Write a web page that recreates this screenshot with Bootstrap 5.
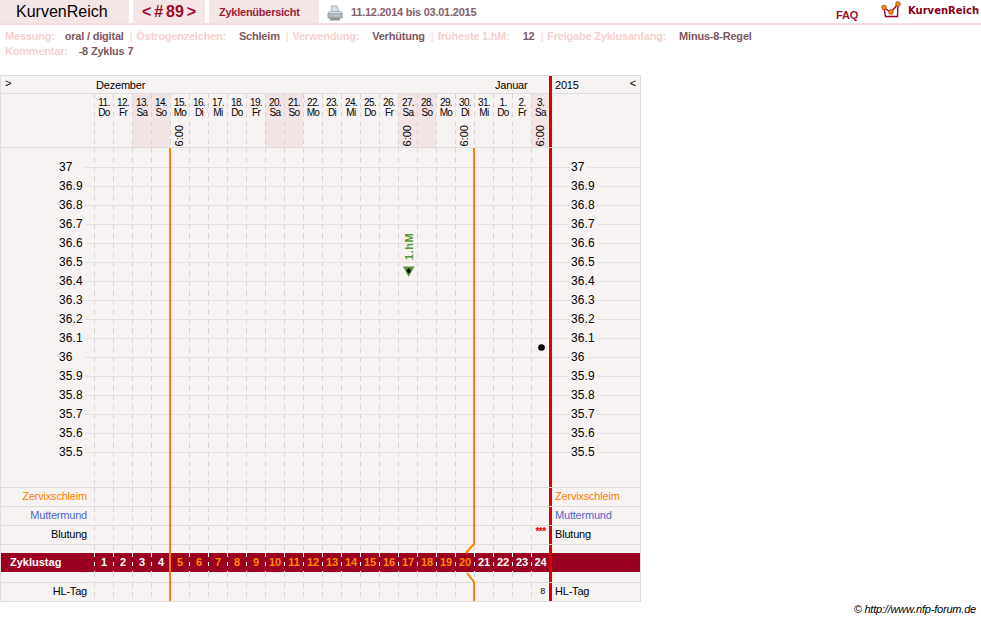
<!DOCTYPE html>
<html lang="de">
<head>
    <meta charset="UTF-8">
    <meta name="viewport" content="width=device-width, initial-scale=1.0">
    <title>KurvenReich</title>
    <link rel="stylesheet" href="https://cdn.jsdelivr.net/npm/bootstrap@5.3.0/dist/css/bootstrap.min.css">
    <style>
        body { font-family: "Liberation Sans", Arial, sans-serif; font-size: 11px; line-height: 15px; letter-spacing: -.2px; color: #000; background: #fff; }
        .kr-top { height: 25px; border-bottom: 2px solid #f4dfe0; }
        .kr-tab { height: 23px; background: #f4e5e6; }
        .kr-brand { width: 129px; margin-right: 4px; padding-left: 16px; font-size: 16px; line-height: 24px; letter-spacing: 0; }
        .kr-nav { width: 72px; margin-right: 4px; font-size: 16px; font-weight: 700; line-height: 24px; letter-spacing: 0; color: #a00b28; text-align: center; word-spacing: -1.5px; }
        .kr-over { width: 110px; padding-left: 10px; font-weight: 700; line-height: 24px; letter-spacing: -.25px; color: #a01c34; }
        .kr-range { margin-left: 8px; font-weight: 700; line-height: 25px; letter-spacing: -.25px; color: #86616a; }
        .kr-range svg { margin: 0 8px 1px 0; }
        .kr-faq { margin-left: auto; margin-right: 23px; padding-top: 8px; font-weight: 700; color: #a01030; text-decoration: none; }
        .kr-logo { width: 100px; padding-top: 1px; font-family: "DejaVu Sans", sans-serif; font-size: 10px; font-weight: 700; letter-spacing: 0; color: #86001e; line-height: 19px; }
        .kr-logo svg { margin-right: 7px; vertical-align: top; }
        .kr-info { height: 50px; padding: 4px 0 0 5px; font-weight: 700; color: #7e5660; }
        .kr-info b { color: #f8cfcf; margin-right: 10px; }
        .kr-info i { font-style: normal; color: #f8cfcf; font-weight: 400; margin: 0 4px 0 6px; }
        .kr-chart { width: 641px; border: 1px solid #ddd; background: #f8f3f3; }
        .kr-row { display: grid; grid-template-columns: 93px repeat(23, 19px) 18px 91px; height: 19px; line-height: 17px; border-bottom: 1px solid #ddd; }
        .kr-row.kr-plain { border-bottom: 0; }
        .kr-row.kr-last { height: 18px; }
        .kr-d { background: linear-gradient(#d9d5d5 55%, transparent 55%) 0 0 / 1px 9px repeat-y; padding-left: 1px; text-align: center; }
        .kr-lab { padding-right: 7px; text-align: right; }
        .kr-right { border-left: 3px solid #dc0000; padding-left: 3px; }
        .kr-month { height: 18px; line-height: 19px; }
        .kr-month span { padding-left: 2px; }
        .kr-arrow { line-height: 15px; }
        .kr-days { height: 54px; line-height: 9.5px; font-size: 10px; letter-spacing: -.6px; }
        .kr-days .kr-d { padding-top: 4px; position: relative; }
        .kr-we { background-color: #f3e4e5; }
        .kr-hour { position: absolute; left: 4px; bottom: 1px; writing-mode: vertical-rl; transform: rotate(180deg); font-size: 11px; letter-spacing: 0; line-height: 11px; }
        .kr-temp { border-bottom: 0; font-size: 12px; letter-spacing: .1px; line-height: 18px; background: linear-gradient(#e6e1e1, #e6e1e1) 0 9px / 100% 1px no-repeat; }
        .kr-tl { display: block; width: 84px; height: 19px; padding-left: 58px; background: #f8f3f3; }
        .kr-temp .kr-right { padding-left: 18px; }
        .kr-tr { display: inline-block; padding: 0 2px 0 1px; background: #f8f3f3; height: 19px; }
        .kr-bar { background: #9c0020; color: #fff; font-weight: 700; border-bottom: 0; height: 19px; line-height: 18px; letter-spacing: 0; }
        .kr-bar .kr-d { background-image: linear-gradient(#fff 44%, transparent 44%); }
        .kr-bar .kr-o { color: #ff8a00; }
        .kr-zt { padding-left: 9px; }
        .kr-ze { color: #ff8000; }
        .kr-mu { color: #4f66cc; }
        .kr-sm { display: block; font-size: 9px; text-align: right; padding-right: 4px; }
        .kr-bl { color: #dc0000; font-weight: 700; font-size: 10px; line-height: 12px; letter-spacing: -.5px; }
        .kr-over-svg { position: absolute; left: -1px; top: -1px; pointer-events: none; }
        .kr-hm { font-family: "Liberation Sans", sans-serif; font-size: 11px; font-weight: 700; letter-spacing: .5px; fill: #5d9634; }
        .kr-copy { width: 976px; font-style: italic; text-align: right; }
    </style>
</head>
<body>
    <div class="kr-top d-flex">
        <div class="kr-tab kr-brand">KurvenReich</div>
        <div class="kr-tab kr-nav">&lt; # 89 &gt;</div>
        <div class="kr-tab kr-over">Zyklenübersicht</div>
        <div class="kr-range">
            <svg width="16" height="16" viewBox="0 0 16 16" class="align-middle">
                <path d="M4 1 L10 1 L12 7 L5 7 Z" fill="#cfe0ee" stroke="#8aa0b4" stroke-width=".7"/>
                <path d="M1 8 L15 8 L15 13 L1 13 Z" fill="#b8bcc0" stroke="#7c8084" stroke-width=".7"/>
                <path d="M2 6.5 L14 6.5 L15 8.5 L1 8.5 Z" fill="#e4e6e8" stroke="#90949a" stroke-width=".6"/>
                <path d="M3 13 L13 13 L13 15.5 L3 15.5 Z" fill="#8e9296"/>
            </svg>11.12.2014 bis 03.01.2015
        </div>
        <a class="kr-faq" href="#">FAQ</a>
        <div class="kr-logo">
            <svg width="20" height="18" viewBox="0 0 20 18">
                <path d="M1 16.5 H19 M11 1 V18" stroke="#eee" stroke-width="1" fill="none"/>
                <path d="M3 7 L4.5 15.5 H16.5 L17 3" stroke="#9c0030" stroke-width="1.4" fill="none"/>
                <path d="M3 7 L10 11 L17 3" stroke="#9c0030" stroke-width="1.4" fill="none"/>
                <circle cx="3" cy="6.5" r="2.4" fill="#f08c10" stroke="#a03010" stroke-width=".6"/>
                <circle cx="10" cy="11" r="2.4" fill="#f08c10" stroke="#a03010" stroke-width=".6"/>
                <circle cx="17" cy="3" r="2.4" fill="#f08c10" stroke="#a03010" stroke-width=".6"/>
            </svg>KurvenReich
        </div>
    </div>

    <div class="kr-info">
        <div class="text-nowrap"><b>Messung:</b>oral / digital<i>|</i><b>Östrogenzeichen:</b> Schleim<i>|</i><b>Verwendung:</b> Verhütung<i>|</i><b>früheste 1.hM:</b> 12<i>|</i><b>Freigabe Zyklusanfang:</b> Minus-8-Regel</div>
        <div class="text-nowrap"><b class="me-2">Kommentar:</b> -8 Zyklus 7</div>
    </div>

    <div class="kr-chart position-relative" id="chart"></div>
    <div class="kr-copy">© http://www.nfp-forum.de</div>

    <script>
        const chart = document.getElementById('chart');
        const names = ['Do', 'Fr', 'Sa', 'So', 'Mo', 'Di', 'Mi'];
        const dates = [11,12,13,14,15,16,17,18,19,20,21,22,23,24,25,26,27,28,29,30,31,1,2,3];
        const hours = [4, 16, 19, 23];

        function cells(fill) {
            let html = '';
            for (let i = 0; i < 24; i++) html += `<div class="kr-d">${fill ? fill(i) : ''}</div>`;
            return html;
        }
        function row(cls, left, right, fill) {
            return `<div class="kr-row ${cls}"><div>${left}</div>${cells(fill)}<div class="kr-right">${right}</div></div>`;
        }

        let html = `<div class="kr-row kr-month"><div class="ps-1 kr-arrow">&gt;</div>
            <span style="grid-column: 2 / span 21">Dezember</span>
            <span style="grid-column: 23 / span 3">Januar</span>
            <div class="kr-right d-flex justify-content-between pe-1"><span class="p-0">2015</span><span class="p-0 kr-arrow">&lt;</span></div></div>`;

        html += '<div class="kr-row kr-days"><div></div>';
        dates.forEach((d, i) => {
            const name = names[i % 7];
            const we = name === 'Sa' || name === 'So' ? ' kr-we' : '';
            const hour = hours.includes(i) ? '<span class="kr-hour">6:00</span>' : '';
            html += `<div class="kr-d${we}">${d}.<br>${name}${hour}</div>`;
        });
        html += '<div class="kr-right"></div></div>';

        html += `<div class="kr-row kr-plain" style="height: 10px"><div></div>${cells()}<div class="kr-right"></div></div>`;
        for (let t = 370; t >= 355; t--) {
            const v = String(t / 10);
            html += row('kr-temp', `<span class="kr-tl">${v}</span>`, `<span class="kr-tr">${v}</span>`);
        }
        html += `<div class="kr-row" style="height: 26px"><div></div>${cells()}<div class="kr-right"></div></div>`;

        html += row('', '<div class="kr-lab kr-ze">Zervixschleim</div>', '<span class="kr-ze">Zervixschleim</span>');
        html += row('', '<div class="kr-lab kr-mu">Muttermund</div>', '<span class="kr-mu">Muttermund</span>');
        html += row('', '<div class="kr-lab">Blutung</div>', 'Blutung', i => i === 23 ? '<span class="kr-bl d-block">***</span>' : '');
        html += `<div class="kr-row kr-plain" style="height: 8px"><div></div>${cells()}<div class="kr-right"></div></div>`;
        html += row('kr-bar', '<div class="kr-zt">Zyklustag</div>', '', i => `<span class="${i >= 4 && i < 20 ? 'kr-o' : ''}">${i + 1}</span>`);
        html += `<div class="kr-row" style="height: 11px"><div></div>${cells()}<div class="kr-right"></div></div>`;
        html += row('kr-plain kr-last', '<div class="kr-lab">HL-Tag</div>', 'HL-Tag', i => i === 23 ? '<span class="kr-sm">8</span>' : '');

        html += `<svg class="kr-over-svg" width="641" height="527" viewBox="0 75 641 527">
            <path d="M170 148 V601 M474 148 V544 L466 553 M467 573 L474 582 V601" stroke="#ff8000" stroke-width="2" fill="none"/>
            <circle cx="541.5" cy="347.5" r="3.3" fill="#000"/>
            <path d="M403 266.5 H414.5 L408.7 277 Z" fill="#5d9634"/>
            <path d="M408.7 268 L411 270.8 L408.7 273.8 L406.4 270.8 Z" fill="#000"/>
            <text class="kr-hm" transform="translate(412.5 260) rotate(-90)">1.hM</text>
        </svg>`;
        chart.innerHTML = html;
    </script>
    <script src="https://cdn.jsdelivr.net/npm/bootstrap@5.3.0/dist/js/bootstrap.bundle.min.js"></script>
</body>
</html>
